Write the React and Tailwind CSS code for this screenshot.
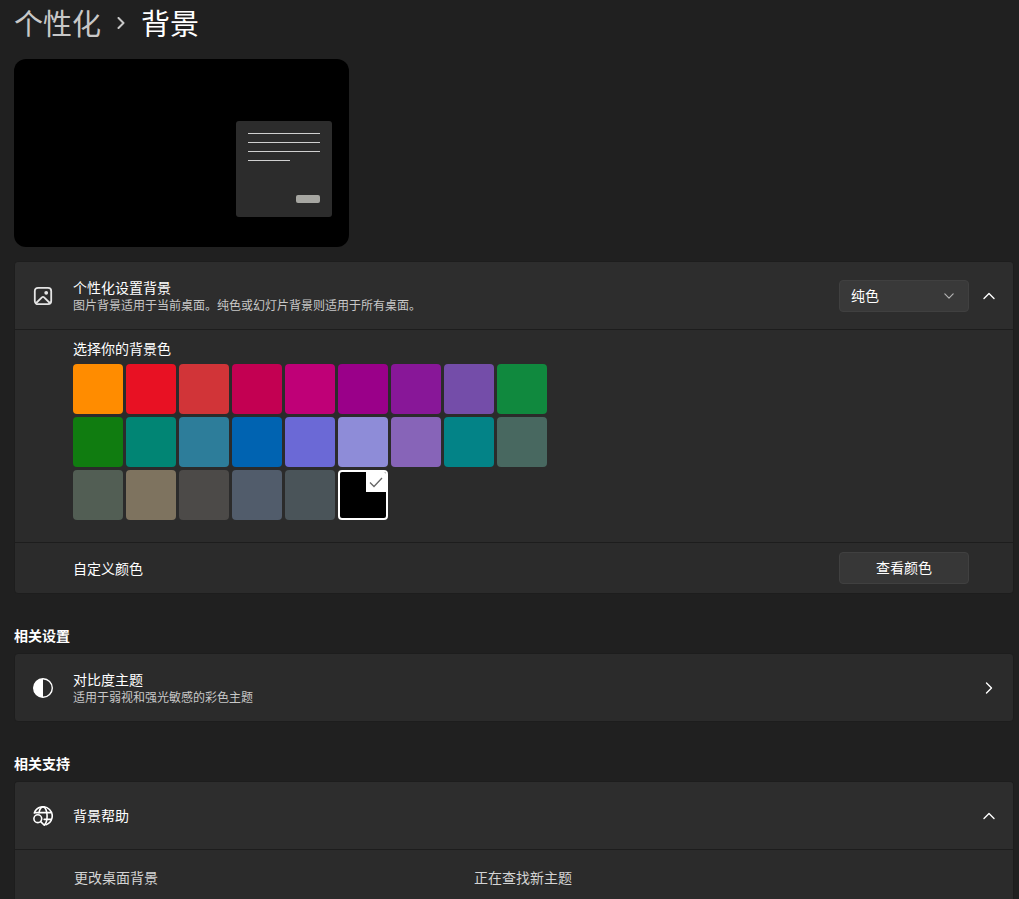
import React from "react";

const swatches = [
  ["橙色", "bg-[#ff8c00]"],
  ["红色", "bg-[#e81123]"],
  ["浅红", "bg-[#d13438]"],
  ["玫瑰红", "bg-[#c30052]"],
  ["洋红", "bg-[#bf0077]"],
  ["紫红", "bg-[#9a0089]"],
  ["深紫", "bg-[#881798]"],
  ["紫色", "bg-[#744da9]"],
  ["绿色", "bg-[#10893e]"],
  ["深绿", "bg-[#107c10]"],
  ["青绿", "bg-[#018574]"],
  ["灰蓝", "bg-[#2d7d9a]"],
  ["蓝色", "bg-[#0063b1]"],
  ["靛蓝", "bg-[#6b69d6]"],
  ["浅紫", "bg-[#8e8cd8]"],
  ["藕紫", "bg-[#8764b8]"],
  ["青色", "bg-[#038387]"],
  ["苔绿", "bg-[#486860]"],
  ["军绿", "bg-[#525e54]"],
  ["卡其", "bg-[#7e735f]"],
  ["暖灰", "bg-[#4c4a48]"],
  ["蓝灰", "bg-[#515c6b]"],
  ["冷灰", "bg-[#4a5459]"],
  ["黑色", "bg-black"],
];

const chevrons = {
  up: "M1 8.5 6 3.5l5 5",
  down: "M1 3.5 6 8.5l5-5",
  right: "M3.5 1 8.5 6l-5 5",
};

function Chevron({ direction, className }) {
  return (
    <svg viewBox="0 0 12 12" fill="none" stroke="currentColor" strokeLinecap="round" strokeLinejoin="round" className={className} aria-hidden="true">
      <path d={chevrons[direction]} />
    </svg>
  );
}

function PictureIcon() {
  return (
    <svg viewBox="0 0 20 20" fill="none" stroke="currentColor" strokeWidth="1.8" className="size-5" aria-hidden="true">
      <rect x="1.8" y="1.8" width="16.4" height="16.4" rx="3.2" />
      <path d="m3.2 17 5.700-5.600a1.600 1.600 0 0 1 2.200 0l5.700 5.600" />
      <circle cx="13.2" cy="6.8" r="1" fill="currentColor" />
    </svg>
  );
}

function ContrastIcon() {
  return (
    <svg viewBox="0 0 20 20" className="size-5" aria-hidden="true">
      <circle cx="10" cy="10" r="9.3" fill="none" stroke="currentColor" strokeWidth="1.4" />
      <path d="M10 .7a9.3 9.3 0 0 0 0 18.6z" fill="currentColor" />
    </svg>
  );
}

function GlobeSearchIcon() {
  return (
    <svg viewBox="0 0 20 20" fill="none" stroke="currentColor" strokeWidth="1.6" strokeLinecap="round" className="size-5" aria-hidden="true">
      <path d="M1.300 7A9.200 9.200 0 1 1 13 18.700" />
      <path d="M1.800 6.600h16.400M11.200 13.400h7" />
      <path d="M6 6.600C6.700 3.200 8.200.9 10.100.9c2.300 0 4 4.100 4 9.100 0 4-1 7.300-2.500 8.600" />
      <circle cx="4.800" cy="12.700" r="3.900" />
      <path d="m7.700 15.600 3.600 3.600" />
    </svg>
  );
}

function Card({ className = "", children }) {
  return <div className={`rounded border border-[#1d1d1d] bg-[#2b2b2b] ${className}`}>{children}</div>;
}

function RowLabel({ title, detail }) {
  return (
    <span className="min-w-0 flex-1 text-left">
      <span className={`block text-sm leading-[18px] ${detail ? "" : "pb-0.5"}`}>{title}</span>
      {detail && <span className="block text-xs leading-[18px] text-[#c8c8c8]">{detail}</span>}
    </span>
  );
}

function Preview() {
  return (
    <div className="mt-[15px] flex h-[188px] w-[335px] items-end justify-end rounded-xl bg-black pr-[17px] pb-[30px]">
      <div className="flex size-24 flex-col gap-2 rounded-[3px] bg-[#2c2c2c] px-3 pt-3">
        <div className="h-px bg-[#d0d0d0]" />
        <div className="h-px bg-[#d0d0d0]" />
        <div className="h-px bg-[#d0d0d0]" />
        <div className="h-px w-[42px] bg-[#d0d0d0]" />
        <div className="mt-[26px] h-2 w-6 self-end rounded-[2px] bg-[#a6a6a1]" />
      </div>
    </div>
  );
}

function Swatch({ name, color, selected }) {
  return (
    <button
      type="button"
      aria-label={name}
      aria-pressed={selected}
      className={`flex size-[50px] justify-end overflow-hidden rounded ${color} ${selected ? "border-2 border-white" : ""}`}
    >
      {selected && (
        <span className="flex h-5 w-5 items-center justify-center bg-white text-[#666]">
          <svg viewBox="0 0 14 12" fill="none" stroke="currentColor" strokeWidth="1.3" className="h-3 w-3.5" aria-hidden="true">
            <path d="m1 6.500 4 4 8-8.500" />
          </svg>
        </span>
      )}
    </button>
  );
}

export default function App() {
  return (
    <main className="flex min-h-screen flex-col bg-[#202020] pr-[5px] pl-3.5 font-['Noto_Sans_CJK_SC',sans-serif] text-white">
      <nav aria-label="位置" className="flex h-11 items-center text-[29px] leading-[44px]">
        <a href="#personalization" className="text-[#c8c8c8]">个性化</a>
        <span className="mx-3.5 pt-0.5 text-[#c8c8c8]">
          <Chevron direction="right" className="size-3 stroke-2" />
        </span>
        <h1>背景</h1>
      </nav>

      <Preview />

      <Card className="mt-3.5">
        <div className="flex h-[67px] items-center rounded-t bg-[#2d2d2d] pr-1 pl-[18px]">
          <span className="mr-5 text-[#e4e4e4]"><PictureIcon /></span>
          <label htmlFor="background-type" className="min-w-0 flex-1">
            <RowLabel title="个性化设置背景" detail="图片背景适用于当前桌面。纯色或幻灯片背景则适用于所有桌面。" />
          </label>
          <div className="relative">
            <select id="background-type" defaultValue="纯色" className="h-8 w-[130px] appearance-none rounded border border-[#404040] bg-[#393939] px-[11px] pb-0.5 text-sm">
              <option>图片</option>
              <option>纯色</option>
              <option>幻灯片放映</option>
            </select>
            <Chevron direction="down" className="pointer-events-none absolute top-[11px] right-[15px] size-2.5 stroke-[1.4] text-[#b4b4b4]" />
          </div>
          <button type="button" aria-label="收起背景设置" aria-expanded="true" className="flex size-10 items-center justify-center">
            <Chevron direction="up" className="size-3 stroke-[1.4]" />
          </button>
        </div>

        <div className="border-t border-[#1d1d1d] pt-[9px] pb-[22px] pl-[58px]">
          <h2 className="text-sm leading-[18px]">选择你的背景色</h2>
          <div className="mt-[7px] grid w-max grid-cols-9 gap-[3px]">
            {swatches.map(([name, color]) => (
              <Swatch key={name} name={name} color={color} selected={name === "黑色"} />
            ))}
          </div>
        </div>

        <div className="flex h-[51px] items-center justify-between border-t border-[#1d1d1d] pr-11 pl-[58px]">
          <span id="custom-color" className="text-sm">自定义颜色</span>
          <button type="button" aria-describedby="custom-color" className="h-8 w-[130px] rounded border border-[#404040] bg-[#373737] pb-0.5 text-sm">
            查看颜色
          </button>
        </div>
      </Card>

      <h2 className="mt-[31px] text-sm leading-5 font-semibold">相关设置</h2>
      <Card className="mt-2">
        <a href="#contrast" className="flex h-[67px] items-center pr-[18px] pl-[18px]">
          <span className="mr-5"><ContrastIcon /></span>
          <RowLabel title="对比度主题" detail="适用于弱视和强光敏感的彩色主题" />
          <Chevron direction="right" className="size-3 stroke-[1.4]" />
        </a>
      </Card>

      <h2 className="mt-[31px] text-sm leading-5 font-semibold">相关支持</h2>
      <Card className="mt-2 flex-1 rounded-b-none border-b-0">
        <button type="button" aria-expanded="true" className="flex h-[67px] w-full items-center rounded-t bg-[#2d2d2d] pr-[18px] pl-[18px]">
          <span className="mr-5"><GlobeSearchIcon /></span>
          <RowLabel title="背景帮助" />
          <Chevron direction="up" className="size-3 stroke-[1.4]" />
        </button>
        <div className="flex border-t border-[#1d1d1d] pt-[17px] pl-[59px] text-sm leading-5 text-[#d4d4d4]">
          <a href="#change-background" className="w-[400px]">更改桌面背景</a>
          <a href="#find-themes">正在查找新主题</a>
        </div>
      </Card>
    </main>
  );
}
